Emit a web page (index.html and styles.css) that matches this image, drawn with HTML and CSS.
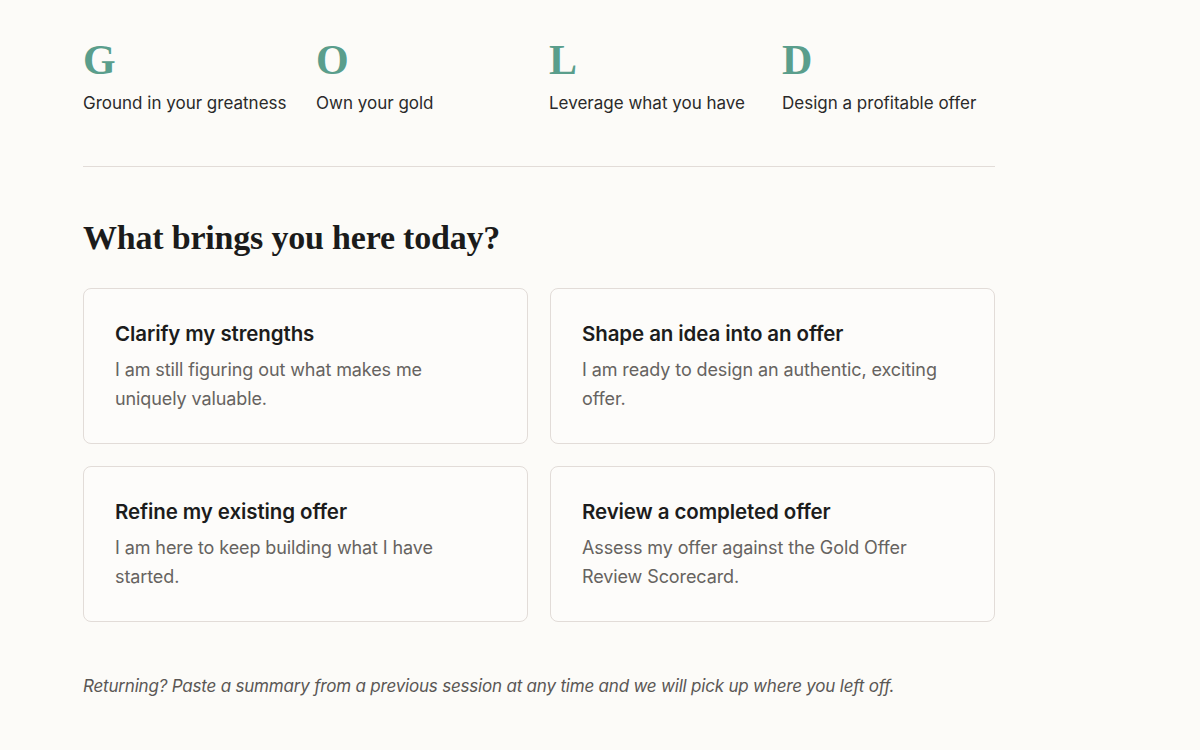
FILE: index.html
```html
<!DOCTYPE html>
<html lang="en">
<head>
<meta charset="utf-8">
<title>GOLD</title>
<link rel="stylesheet" href="styles.css">
</head>
<body>
<main class="page">
  <section class="pillars">
    <div class="pillar"><div class="letter">G</div><div class="label">Ground in your greatness</div></div>
    <div class="pillar"><div class="letter">O</div><div class="label">Own your gold</div></div>
    <div class="pillar"><div class="letter">L</div><div class="label">Leverage what you have</div></div>
    <div class="pillar"><div class="letter">D</div><div class="label">Design a profitable offer</div></div>
  </section>
  <hr class="divider">
  <h1 class="heading">What brings you here today?</h1>
  <section class="cards">
    <button class="card"><span class="card-title">Clarify my strengths</span><span class="card-desc">I am still figuring out what makes me uniquely valuable.</span></button>
    <button class="card"><span class="card-title">Shape an idea into an offer</span><span class="card-desc">I am ready to design an authentic, exciting offer.</span></button>
    <button class="card"><span class="card-title">Refine my existing offer</span><span class="card-desc">I am here to keep building what I have started.</span></button>
    <button class="card"><span class="card-title">Review a completed offer</span><span class="card-desc">Assess my offer against the Gold Offer Review Scorecard.</span></button>
  </section>
  <p class="note">Returning? Paste a summary from a previous session at any time and we will pick up where you left off.</p>
</main>
</body>
</html>
```

FILE: styles.css
```css
html, body {
  margin: 0;
  padding: 0;
  background: #fcfbf8;
}
body {
  font-family: Inter, "Liberation Sans", sans-serif;
  color: #1c1c1c;
}
.page {
  width: 912px;
  padding: 36px 0 0 83px;
}
.pillars {
  display: grid;
  grid-template-columns: repeat(4, 1fr);
  column-gap: 20px;
}
.letter {
  font-family: "Liberation Serif", serif;
  font-weight: 700;
  font-size: 42px;
  line-height: 48px;
  color: #5a9e8c;
}
.label {
  margin-top: 7px;
  font-size: 17px;
  line-height: 24px;
  color: #2a2a2a;
}
.divider {
  border: 0;
  border-top: 1px solid #e2dcd8;
  margin: 51px 0 0 0;
}
.heading {
  margin: 51px 0 0 0;
  font-family: "Liberation Serif", serif;
  font-weight: 700;
  font-size: 34px;
  line-height: 40px;
  color: #1b1b1b;
  letter-spacing: -0.2px;
}
.cards {
  margin-top: 30px;
  display: grid;
  grid-template-columns: 1fr 1fr;
  gap: 22px;
}
.card {
  display: flex;
  flex-direction: column;
  align-items: flex-start;
  text-align: left;
  gap: 7px;
  padding: 31px 31px 30px 31px;
  background: #fdfcfa;
  border: 1px solid #e2dcd8;
  border-radius: 8px;
  font-family: inherit;
  cursor: pointer;
}
.card-title {
  font-size: 20.5px;
  line-height: 28px;
  font-weight: 600;
  color: #1c1c1c;
  letter-spacing: -0.1px;
}
.card-desc {
  font-size: 18px;
  line-height: 29px;
  color: #666360;
  max-width: 362px;
  letter-spacing: -0.1px;
}
.note {
  margin: 52px 0 0 0;
  font-size: 17px;
  line-height: 24px;
  font-style: italic;
  color: #5a5755;
  letter-spacing: -0.2px;
}
```
